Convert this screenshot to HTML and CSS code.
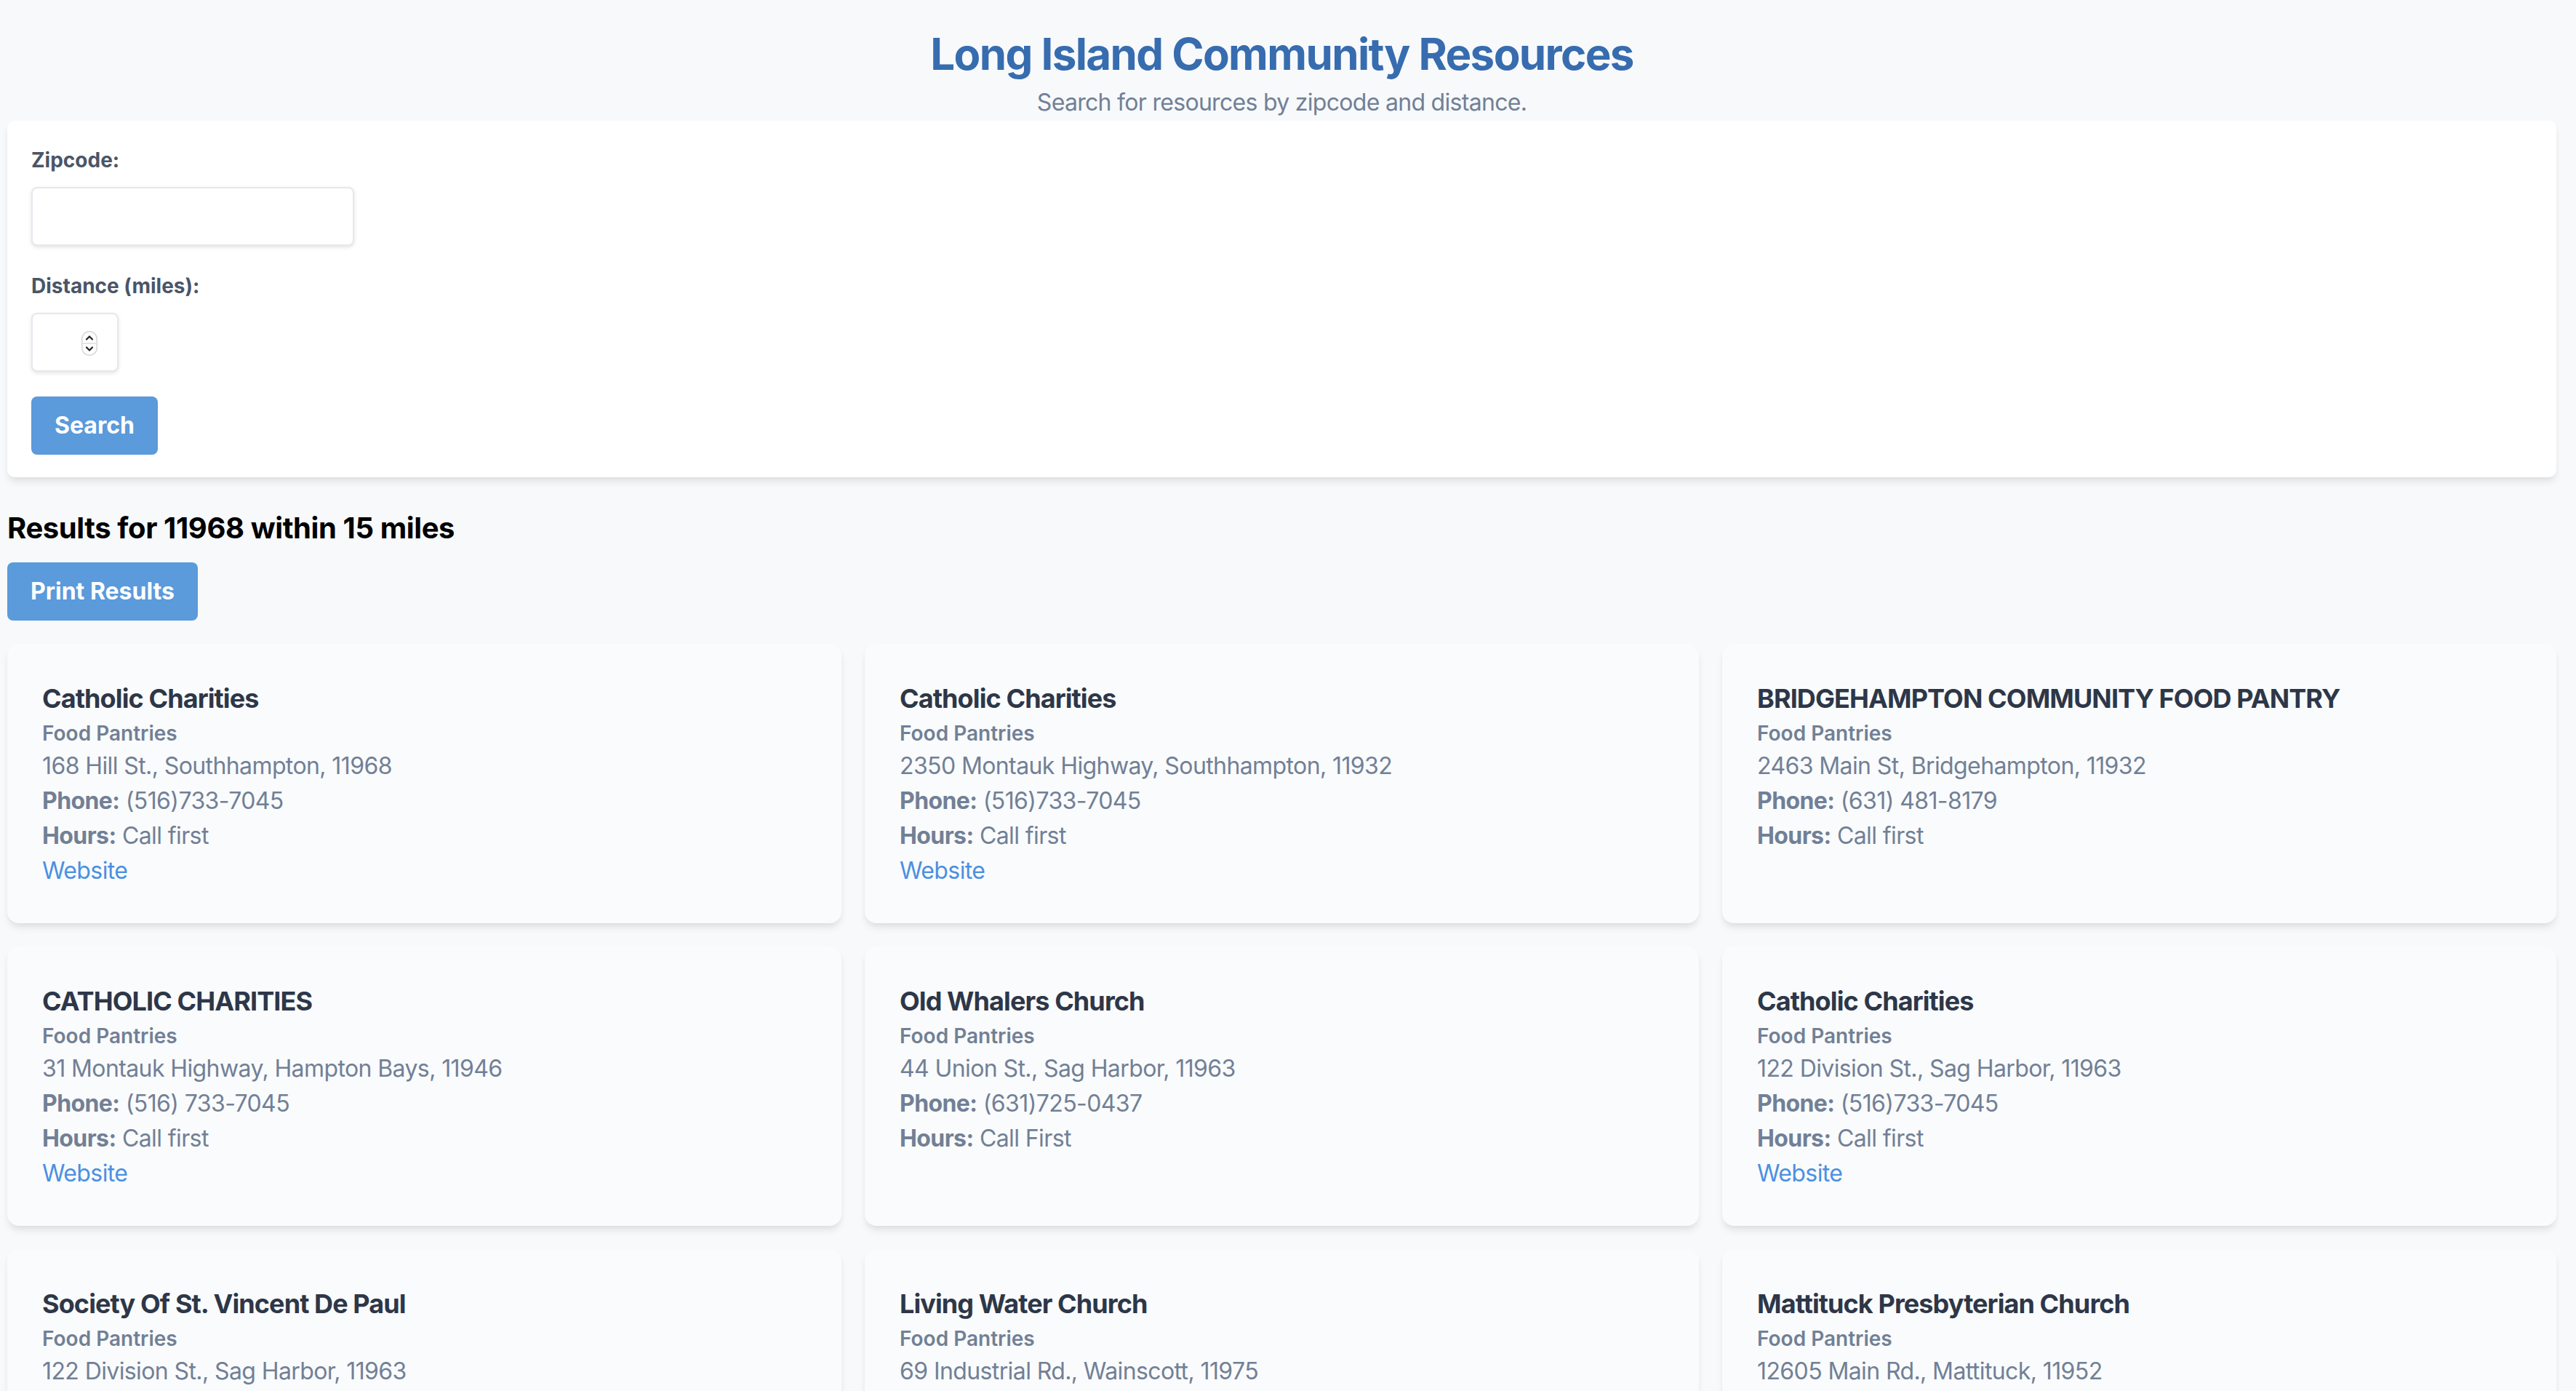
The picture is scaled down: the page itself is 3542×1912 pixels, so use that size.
FILE: index.html
```html
<!DOCTYPE html>
<html lang="en">
<head>
<meta charset="utf-8">
<title>Long Island Community Resources</title>
<link rel="stylesheet" href="styles.css">
</head>
<body>
<div class="page">
  <header class="header">
    <h1 class="title">Long Island Community Resources</h1>
    <p class="subtitle">Search for resources by zipcode and distance.</p>
  </header>

  <form class="search-card">
    <div class="field">
      <label class="label" for="zip">Zipcode:</label>
      <input class="input input-zip" id="zip" type="text">
    </div>
    <div class="field">
      <label class="label" for="dist">Distance (miles):</label>
      <div class="number-wrap">
        <input class="input input-num" id="dist" type="number">
        <svg class="spinner" width="22" height="34" viewBox="0 0 22 34" aria-hidden="true">
          <rect x="0.75" y="0.75" width="20.5" height="32.5" rx="10" fill="#ffffff" stroke="#d4d6da" stroke-width="1.5"/>
          <line x1="1.5" y1="17" x2="20.5" y2="17" stroke="#dcdde0" stroke-width="1.5"/>
          <path d="M7 11.5 L11 7.5 L15 11.5" fill="none" stroke="#222222" stroke-width="2.2" stroke-linecap="round" stroke-linejoin="round"/>
          <path d="M7 22.5 L11 26.5 L15 22.5" fill="none" stroke="#222222" stroke-width="2.2" stroke-linecap="round" stroke-linejoin="round"/>
        </svg>
      </div>
    </div>
    <button class="btn" type="button">Search</button>
  </form>

  <h2 class="results-heading">Results for 11968 within 15 miles</h2>
  <button class="btn btn-print" type="button">Print Results</button>

  <div class="grid">
    <div class="card">
      <h3 class="card-title">Catholic Charities</h3>
      <div class="card-cat">Food Pantries</div>
      <div class="card-line">168 Hill St., Southhampton, 11968</div>
      <div class="card-line"><b>Phone:</b> (516)733-7045</div>
      <div class="card-line"><b>Hours:</b> Call first</div>
      <div class="card-line"><a class="link" href="#">Website</a></div>
    </div>
    <div class="card">
      <h3 class="card-title">Catholic Charities</h3>
      <div class="card-cat">Food Pantries</div>
      <div class="card-line">2350 Montauk Highway, Southhampton, 11932</div>
      <div class="card-line"><b>Phone:</b> (516)733-7045</div>
      <div class="card-line"><b>Hours:</b> Call first</div>
      <div class="card-line"><a class="link" href="#">Website</a></div>
    </div>
    <div class="card">
      <h3 class="card-title">BRIDGEHAMPTON COMMUNITY FOOD PANTRY</h3>
      <div class="card-cat">Food Pantries</div>
      <div class="card-line">2463 Main St, Bridgehampton, 11932</div>
      <div class="card-line"><b>Phone:</b> (631) 481-8179</div>
      <div class="card-line"><b>Hours:</b> Call first</div>
    </div>

    <div class="card">
      <h3 class="card-title">CATHOLIC CHARITIES</h3>
      <div class="card-cat">Food Pantries</div>
      <div class="card-line">31 Montauk Highway, Hampton Bays, 11946</div>
      <div class="card-line"><b>Phone:</b> (516) 733-7045</div>
      <div class="card-line"><b>Hours:</b> Call first</div>
      <div class="card-line"><a class="link" href="#">Website</a></div>
    </div>
    <div class="card">
      <h3 class="card-title">Old Whalers Church</h3>
      <div class="card-cat">Food Pantries</div>
      <div class="card-line">44 Union St., Sag Harbor, 11963</div>
      <div class="card-line"><b>Phone:</b> (631)725-0437</div>
      <div class="card-line"><b>Hours:</b> Call First</div>
    </div>
    <div class="card">
      <h3 class="card-title">Catholic Charities</h3>
      <div class="card-cat">Food Pantries</div>
      <div class="card-line">122 Division St., Sag Harbor, 11963</div>
      <div class="card-line"><b>Phone:</b> (516)733-7045</div>
      <div class="card-line"><b>Hours:</b> Call first</div>
      <div class="card-line"><a class="link" href="#">Website</a></div>
    </div>

    <div class="card">
      <h3 class="card-title">Society Of St. Vincent De Paul</h3>
      <div class="card-cat">Food Pantries</div>
      <div class="card-line">122 Division St., Sag Harbor, 11963</div>
      <div class="card-line"><b>Phone:</b> (631)725-0128</div>
      <div class="card-line"><b>Hours:</b> Call first</div>
    </div>
    <div class="card">
      <h3 class="card-title">Living Water Church</h3>
      <div class="card-cat">Food Pantries</div>
      <div class="card-line">69 Industrial Rd., Wainscott, 11975</div>
      <div class="card-line"><b>Phone:</b> (631)537-0020</div>
      <div class="card-line"><b>Hours:</b> Call first</div>
    </div>
    <div class="card">
      <h3 class="card-title">Mattituck Presbyterian Church</h3>
      <div class="card-cat">Food Pantries</div>
      <div class="card-line">12605 Main Rd., Mattituck, 11952</div>
      <div class="card-line"><b>Phone:</b> (631)298-4145</div>
      <div class="card-line"><b>Hours:</b> Call first</div>
    </div>
  </div>
</div>
</body>
</html>
```

FILE: styles.css
```css
* {
  box-sizing: border-box;
}

html, body {
  margin: 0;
  padding: 0;
  background: #f7f9fb;
}

body {
  font-family: Inter, "Noto Sans", "Liberation Sans", sans-serif;
  color: #1a202c;
}

.page {
  padding: 0 27px 40px 10px;
}

.header {
  padding-top: 38px;
  text-align: center;
}

.title {
  margin: 0;
  font-size: 60px;
  line-height: 72px;
  font-weight: 700;
  letter-spacing: -1.6px;
  color: #376caf;
}

.subtitle {
  margin: 7px 0 0;
  font-size: 32px;
  line-height: 48px;
  letter-spacing: -0.7px;
  color: #718096;
}

.search-card {
  margin-top: 1px;
  background: #ffffff;
  border-radius: 10px;
  padding: 33px 32px 31px 33px;
  box-shadow: 0 8px 12px -2px rgba(0, 0, 0, 0.08), 0 4px 8px -2px rgba(0, 0, 0, 0.05);
}

.field {
  margin-bottom: 34px;
}

.label {
  display: block;
  font-size: 28px;
  line-height: 42px;
  font-weight: 700;
  color: #4a5568;
  margin-bottom: 16px;
}

.input {
  display: block;
  height: 81px;
  border: 2px solid #e5e8ed;
  border-radius: 8px;
  background: #ffffff;
  box-shadow: 0 2px 6px rgba(0, 0, 0, 0.08), 0 2px 4px rgba(0, 0, 0, 0.04);
  padding: 0 24px;
  font-family: inherit;
  font-size: 32px;
  color: #4a5568;
  outline: none;
}

.input-zip {
  width: 444px;
}

.number-wrap {
  position: relative;
  width: 120px;
}

.input-num {
  width: 120px;
  -moz-appearance: textfield;
}

.input-num::-webkit-inner-spin-button,
.input-num::-webkit-outer-spin-button {
  -webkit-appearance: none;
  margin: 0;
}

.spinner {
  position: absolute;
  right: 29px;
  top: 25px;
  pointer-events: none;
}

.btn {
  display: block;
  height: 80px;
  padding: 0 32px;
  border: none;
  border-radius: 8px;
  background: #5b9adb;
  color: #ffffff;
  font-family: inherit;
  font-size: 32px;
  line-height: 48px;
  font-weight: 700;
  cursor: pointer;
}

.results-heading {
  margin: 40px 0 17px;
  font-size: 40px;
  line-height: 60px;
  font-weight: 700;
  letter-spacing: -0.4px;
  color: #000000;
}

.btn-print {
  margin: 0;
}

.grid {
  margin-top: 32px;
  display: grid;
  grid-template-columns: repeat(3, 1fr);
  gap: 32px;
}

.card {
  background: #fafbfc;
  border-radius: 16px;
  padding: 48px;
  box-shadow: 0 8px 12px -2px rgba(0, 0, 0, 0.08), 0 4px 8px -2px rgba(0, 0, 0, 0.05);
}

.card-title {
  margin: 0;
  font-size: 36px;
  line-height: 54px;
  font-weight: 700;
  letter-spacing: -0.9px;
  color: #2d3748;
}

.card-cat {
  font-size: 28px;
  line-height: 42px;
  font-weight: 600;
  color: #718096;
}

.card-line {
  font-size: 32px;
  line-height: 48px;
  letter-spacing: -0.6px;
  color: #718096;
}

.card-line b {
  font-weight: 700;
}

.link {
  color: #4a90e2;
  text-decoration: none;
}
```
